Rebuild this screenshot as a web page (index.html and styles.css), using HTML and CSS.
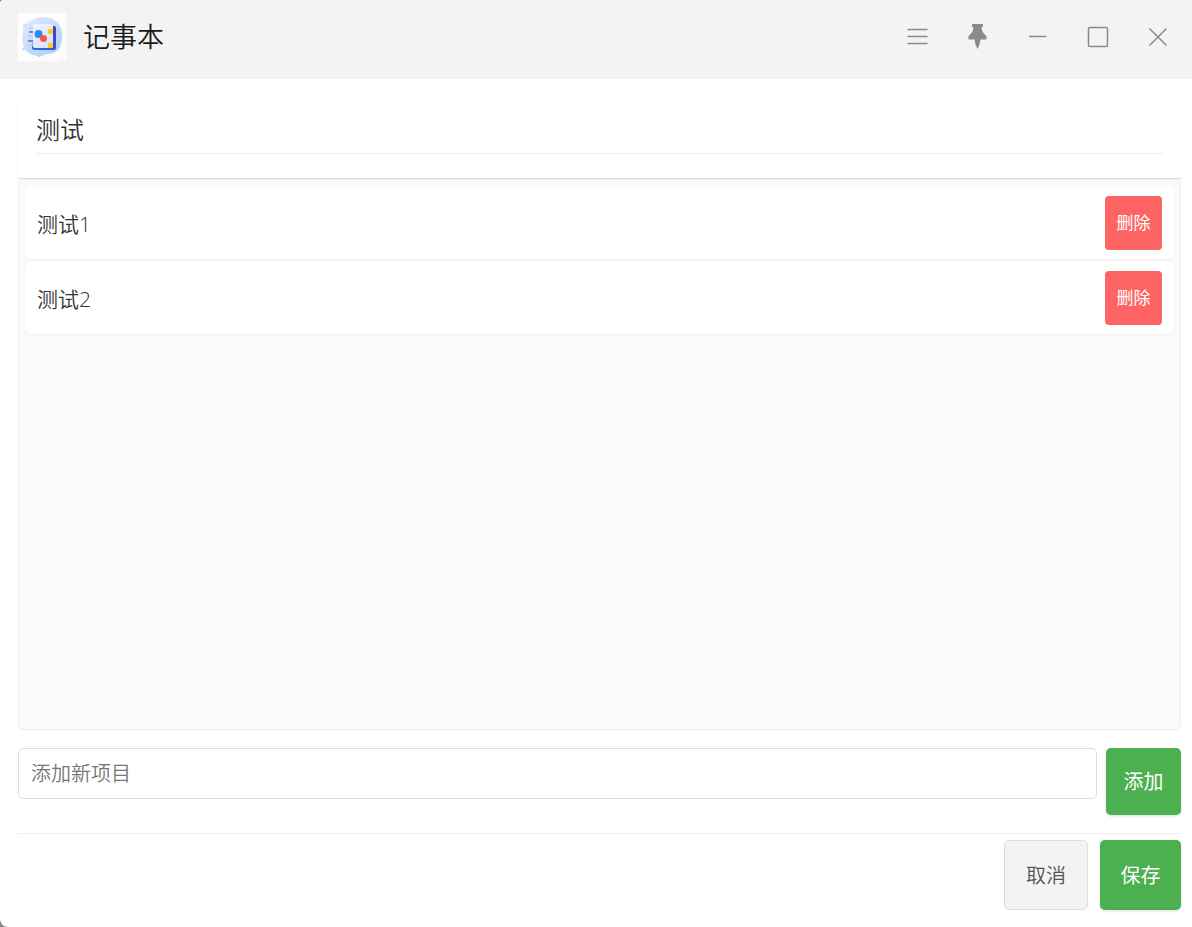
FILE: index.html
```html
<!DOCTYPE html>
<html lang="zh-CN">
<head>
    <meta charset="UTF-8">
    <title>记事本</title>
    <link rel="stylesheet" href="styles.css">
</head>
<body>
    <div class="window">
        <header class="titlebar">
            <svg class="logo" viewBox="0 0 48 48" aria-hidden="true">
                <defs>
                    <linearGradient id="cloud" x1="0" y1="0" x2="1" y2="1">
                        <stop offset="0" stop-color="#e3eefb"/>
                        <stop offset="1" stop-color="#a6cbf6"/>
                    </linearGradient>
                    <linearGradient id="cover" x1="0" y1="0" x2="1" y2="1">
                        <stop offset="0" stop-color="#f1f4fe"/>
                        <stop offset="1" stop-color="#d6dff7"/>
                    </linearGradient>
                    <linearGradient id="spine" x1="0" y1="1" x2="1" y2="0">
                        <stop offset="0" stop-color="#2f6be8"/>
                        <stop offset="1" stop-color="#4a35d0"/>
                    </linearGradient>
                </defs>
                <rect width="48" height="48" fill="#fdfdfb"/>
                <path d="M14 7C19 3 33 3 39 9C45 15 45 24 43 30C42 38 35 41 29 41C22 45 10 42 8 37C4 34 4 25 5 20C5 14 9 9 14 7Z" fill="url(#cloud)"/>
                <circle cx="7" cy="13" r="2.500" fill="#d7e7fa"/>
                <circle cx="6" cy="36" r="1.500" fill="#c3dcf8"/>
                <circle cx="21" cy="42" r="2" fill="#b5d4f7"/>
                <circle cx="42" cy="31" r="1.500" fill="#c3dcf8"/>
                <path d="M17 13H36Q38 13 38 15V35Q38 37 36 37H16Q14 37 14 35Z" fill="url(#spine)"/>
                <path d="M17 11H33Q35 11 35 13V35H17Q15 35 15 33V13Q15 11 17 11Z" fill="url(#cover)"/>
                <rect x="30" y="16" width="5" height="5" fill="#ffc928"/>
                <rect x="30" y="30" width="5" height="5" fill="#ffc928"/>
                <path d="M11 15H15M10 23H15M11 32H15" stroke="#b9bde6" stroke-width="1"/>
                <path d="M11 19H15M10 28H15" stroke="#6a55dc" stroke-width="1.500"/>
                <circle cx="20.500" cy="21" r="4" fill="#3189f4"/>
                <circle cx="25.500" cy="25.500" r="3.500" fill="#f9574d"/>
                <path d="M42 46H46" stroke="#ecebe8"/>
            </svg>
            <h1 class="app-name">记事本</h1>
            <div class="window-buttons">
                <button class="window-btn" type="button" aria-label="菜单">
                    <svg viewBox="0 0 28 28"><path d="M3.500 6.500H23.500M3.500 13.500H23.500M3.500 20.500H23.500"/></svg>
                </button>
                <button class="window-btn" type="button" aria-label="置顶">
                    <svg viewBox="0 0 28 28"><path class="pin" d="M8 1H19V3.500L17.500 4.500C18 8 19 10 22.500 13V16.500H16.500L15.500 21.500L13.500 26L11.500 21.500L10.500 16.500H4.500V13C8 10 9 8 9.500 4.500L8 3.500Z"/></svg>
                </button>
                <button class="window-btn" type="button" aria-label="最小化">
                    <svg viewBox="0 0 28 28"><path d="M5 13.500H22.500"/></svg>
                </button>
                <button class="window-btn" type="button" aria-label="最大化">
                    <svg viewBox="0 0 28 28"><rect x="4.500" y="4.500" width="19" height="19" rx="1.500"/></svg>
                </button>
                <button class="window-btn" type="button" aria-label="关闭">
                    <svg viewBox="0 0 28 28"><path d="M5.500 5.500L22.500 22.500M22.500 5.500L5.500 22.500"/></svg>
                </button>
            </div>
        </header>

        <main class="content">
            <div class="note-header">
                <input class="note-title" type="text" value="测试" aria-label="标题">
            </div>
            <ul class="note-list">
                <li class="note-item">
                    <span class="note-text">测试1</span>
                    <button class="delete-btn" type="button">删除</button>
                </li>
                <li class="note-item">
                    <span class="note-text">测试2</span>
                    <button class="delete-btn" type="button">删除</button>
                </li>
            </ul>
            <form class="add-row">
                <input class="add-input" type="text" placeholder="添加新项目" aria-label="添加新项目">
                <button class="btn btn-add" type="button">添加</button>
            </form>
            <footer class="actions">
                <button class="btn btn-cancel" type="button">取消</button>
                <button class="btn btn-save" type="button">保存</button>
            </footer>
        </main>
    </div>
</body>
</html>
```
FILE: styles.css
```css
* { box-sizing: border-box; }
body { margin: 0; background: #8a8a8a; color: #333; font-family: "Open Sans", "Noto Sans CJK SC", sans-serif; font-weight: 350; }
button, input { font-family: inherit; font-weight: inherit; }
button { cursor: pointer; }

.window { display: flex; flex-direction: column; min-height: 100vh; background: #fff; border-radius: 4px 0 0 8px; overflow: hidden; }

.titlebar { display: flex; align-items: center; padding: 13px 4px 18px 18px; background: #f3f3f3; }
.logo { width: 48px; height: 48px; }
.app-name { margin: 0 0 0 17px; font-size: 27px; font-weight: inherit; line-height: 48px; color: #1a1a1a; }
.window-buttons { display: flex; margin-left: auto; }
.window-btn { display: flex; align-items: center; justify-content: center; width: 60px; height: 48px; padding: 0; border: 0; background: none; }
.window-btn svg { width: 28px; height: 28px; fill: none; stroke: #8a8a8a; stroke-width: 1.5; }
.window-btn .pin { fill: #8a8a8a; stroke: none; }

.content { display: flex; flex: 1; flex-direction: column; padding: 18px 11px 17px 18px; }
.note-header { padding: 9px 18px 24px; border-bottom: 1px solid #ddd; box-shadow: 0 1px 3px rgba(0, 0, 0, 0.05); }
.note-title { display: block; width: 100%; height: 48px; padding: 0 0 2px; border: 0; border-bottom: 1px solid #eee; background: none; color: #333; font-size: 24px; outline: none; }

.note-list { display: flex; flex: 1; flex-direction: column; gap: 3px; margin: 0 0 18px; padding: 7px 6px; list-style: none; background: #fafafa; border: 1px solid #eee; border-radius: 6px; }
.note-item { display: flex; align-items: center; justify-content: space-between; padding: 9px 12px; background: #fff; border-radius: 6px; box-shadow: 0 1px 1px rgba(0, 0, 0, 0.04); }
.note-text { font-size: 21px; }
.delete-btn { min-width: 57px; height: 54px; padding: 0 11px 4px; border: 0; border-radius: 4px; background: #ff6464; color: #fff; font-size: 17px; font-weight: 400; }

.add-row { display: flex; align-items: flex-start; gap: 9px; padding-bottom: 18px; border-bottom: 1px solid #eee; }
.add-input { flex: 1; height: 51px; padding: 0 12px; border: 1px solid #ddd; border-radius: 5px; background: #fff; font-size: 20px; outline: none; }
.add-input::placeholder { color: #757575; }

.actions { display: flex; justify-content: flex-end; gap: 12px; padding-top: 6px; }
.btn { min-width: 81px; height: 70px; padding: 0 20px 2px; border: 0; border-radius: 5px; background: #4caf50; color: #fff; font-size: 20px; font-weight: 400; box-shadow: 0 1px 3px rgba(0, 0, 0, 0.15); }
.btn-add { min-width: 75px; height: 67px; padding: 0 17px 2px; }
.btn-cancel { min-width: 84px; border: 1px solid #ddd; background: #f3f3f3; color: #555; font-weight: inherit; box-shadow: none; }
```
